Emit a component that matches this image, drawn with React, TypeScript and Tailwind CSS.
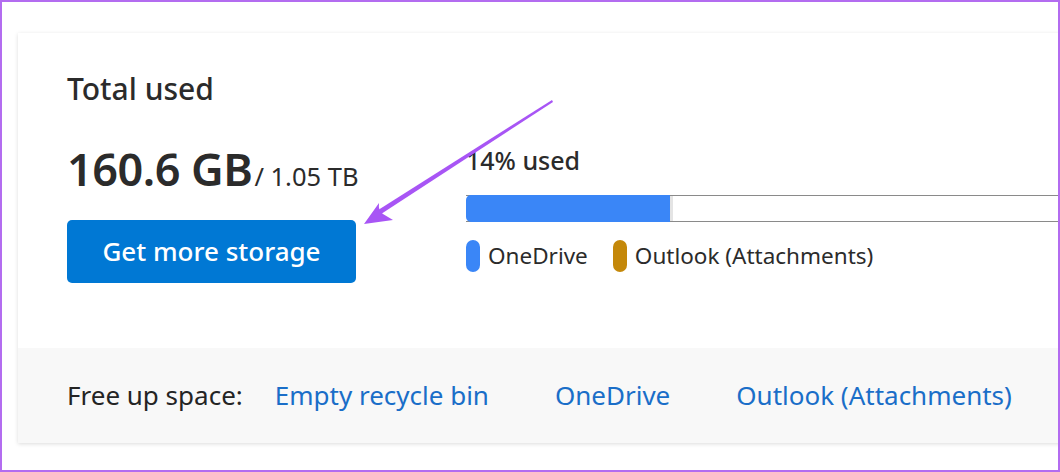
const font = { fontFamily: '"Noto Sans", "Open Sans", sans-serif' };

const legend = [
    { label: "OneDrive", color: "bg-[#3a86f7]" },
    { label: "Outlook (Attachments)", color: "bg-[#c4880a]" },
];

const links = ["Empty recycle bin", "OneDrive", "Outlook (Attachments)"];

export default function App() {
    return (
        <div className="relative h-[472px] w-[1060px] overflow-hidden border-2 border-[#b36cf0] bg-white" style={font}>
            <div className="ml-4 mt-[31px] w-[1060px] bg-white shadow-[0_1px_4px_rgba(0,0,0,0.14)]">
                {/* Summary */}
                <div className="flex h-[315px] text-[#2b2b2b]">
                    <div className="w-[448px] shrink-0 pl-[49px]">
                        <div className="mt-[38px] text-[30px] leading-[36px] font-medium">Total used</div>
                        <div className="mt-[36px] flex items-baseline">
                            <span className="text-[45px] leading-[52px] font-semibold tracking-[-0.5px]">160.6 GB</span>
                            <span className="ml-0.5 text-[25.5px]">/ 1.05 TB</span>
                        </div>
                        <button className="mt-[25px] h-[63px] w-[289px] rounded-[5px] bg-[#0078d4] text-[26px] font-medium text-white">
                            Get more storage
                        </button>
                    </div>
                    <div className="flex-1">
                        <div className="mt-[111px] text-[25px] leading-[32px] font-medium">14% used</div>
                        <div className="mt-[19px] flex h-[27px] border-y border-[#8a8a8a]">
                            <div className="-my-px w-[204px] rounded-l-[5px] bg-[#3a86f7]" />
                            <div className="w-[3px] bg-[#e4e4e4]" />
                            <div className="flex-1" />
                        </div>
                        <div className="mt-[17px] flex items-center">
                            {legend.map((l) => (
                                <div key={l.label} className="mr-[25px] flex items-center">
                                    <span className={`h-[32px] w-[14px] rounded-full ${l.color}`} />
                                    <span className="ml-2 text-[22.5px]">{l.label}</span>
                                </div>
                            ))}
                        </div>
                    </div>
                </div>
                {/* Free up space */}
                <div className="flex h-[95px] items-center bg-[#f8f8f8] pl-[49px] text-[26px]">
                    <span className="text-[#242424]">Free up space:</span>
                    <div className="ml-8 flex gap-[66px] text-[#1a6ec8]">
                        {links.map((t) => (
                            <a key={t} className="cursor-pointer">{t}</a>
                        ))}
                    </div>
                </div>
            </div>

            {/* Annotation arrow */}
            <svg className="absolute left-0 top-0" width="1060" height="472" viewBox="0 0 1060 472">
                <polygon points="550,98 551,100 376,214 373,210" fill="#a855f5" />
                <path d="M362,222 L377,201 Q376,209 381,212 Q386,215 391,218 Z" fill="#a855f5" />
            </svg>
        </div>
    );
}
